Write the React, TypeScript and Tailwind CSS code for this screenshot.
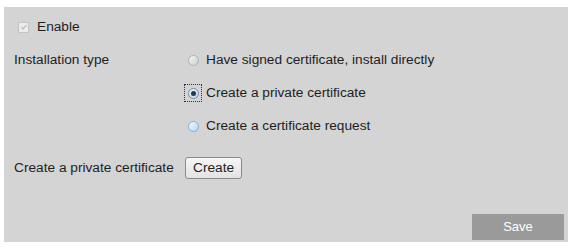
import { useState } from 'react'

type Opt = { id: string; label: string }

const options: Opt[] = [
    { id: 'signed', label: 'Have signed certificate, install directly' },
    { id: 'private', label: 'Create a private certificate' },
    { id: 'request', label: 'Create a certificate request' },
]

function Radio({ state }: { state: 'disabled' | 'checked' | 'idle' }) {
    const ring =
        state === 'disabled'
            ? 'border-[#b0b0b0] bg-gradient-to-br from-[#f4f4f4] to-[#cfcfcf]'
            : state === 'checked'
              ? 'border-[#6f8ea8] bg-gradient-to-br from-[#eef4f8] to-[#c6d6e2]'
              : 'border-[#86aecb] bg-gradient-to-br from-[#f2f9ff] to-[#b6d8f0]'
    return (
        <span className={`w-[11px] h-[11px] rounded-full border flex items-center justify-center ${ring}`}>
            {state === 'checked' && <span className="w-[5px] h-[5px] rounded-full bg-[#1d3a52]" />}
        </span>
    )
}

export default function App() {
    const [sel] = useState('private')

    return (
        <div className="w-[573px] h-[248px] bg-white pt-[7px] pl-[4px] font-['Liberation_Sans',Arial,sans-serif] text-[13.7px] text-[#1e1e1e]">
            <div className="w-[564px] h-[235px] bg-[#d4d4d4] flex flex-col pl-[10px] pr-[4px] pt-[7px]">
                <label className="h-[26px] flex items-center gap-[8px] pl-[4px]">
                    <span className="w-[11px] h-[11px] border border-[#c4c4c4] bg-[#ececec] flex items-center justify-center">
                        <svg viewBox="0 0 10 10" className="w-[8px] h-[8px]">
                            <path d="M2 5.2 L4 7.5 L8 2.5" fill="none" stroke="#b3b3b3" strokeWidth="1.4" />
                        </svg>
                    </span>
                    <span>Enable</span>
                </label>

                <div className="flex mt-[7px]">
                    <div className="w-[170px] h-[26px] flex items-center">Installation type</div>
                    <div className="flex flex-col gap-[7px]">
                        {options.map((o) => {
                            const state = o.id === 'signed' ? 'disabled' : o.id === sel ? 'checked' : 'idle'
                            return (
                                <div key={o.id} className="h-[26px] flex items-center">
                                    <span
                                        className={`w-[18px] h-[18px] flex items-center justify-center ${
                                            state === 'checked' ? 'border border-dotted border-[#333]' : 'border border-transparent'
                                        }`}
                                    >
                                        <Radio state={state} />
                                    </span>
                                    <span className="ml-[4px]">{o.label}</span>
                                </div>
                            )
                        })}
                    </div>
                </div>

                <div className="flex items-center h-[26px] mt-[16px]">
                    <span className="w-[171px]">Create a private certificate</span>
                    <button className="h-[22px] px-[7px] rounded-[3px] border border-[#8a8a8a] bg-gradient-to-b from-[#f6f6f6] to-[#e2e2e2] text-[#1e1e1e]">
                        Create
                    </button>
                </div>

                <div className="flex-1" />
                <div className="flex justify-end pb-[2px]">
                    <button className="w-[92px] h-[26px] bg-[#9a9a9a] text-white text-[13px]">Save</button>
                </div>
            </div>
        </div>
    )
}
